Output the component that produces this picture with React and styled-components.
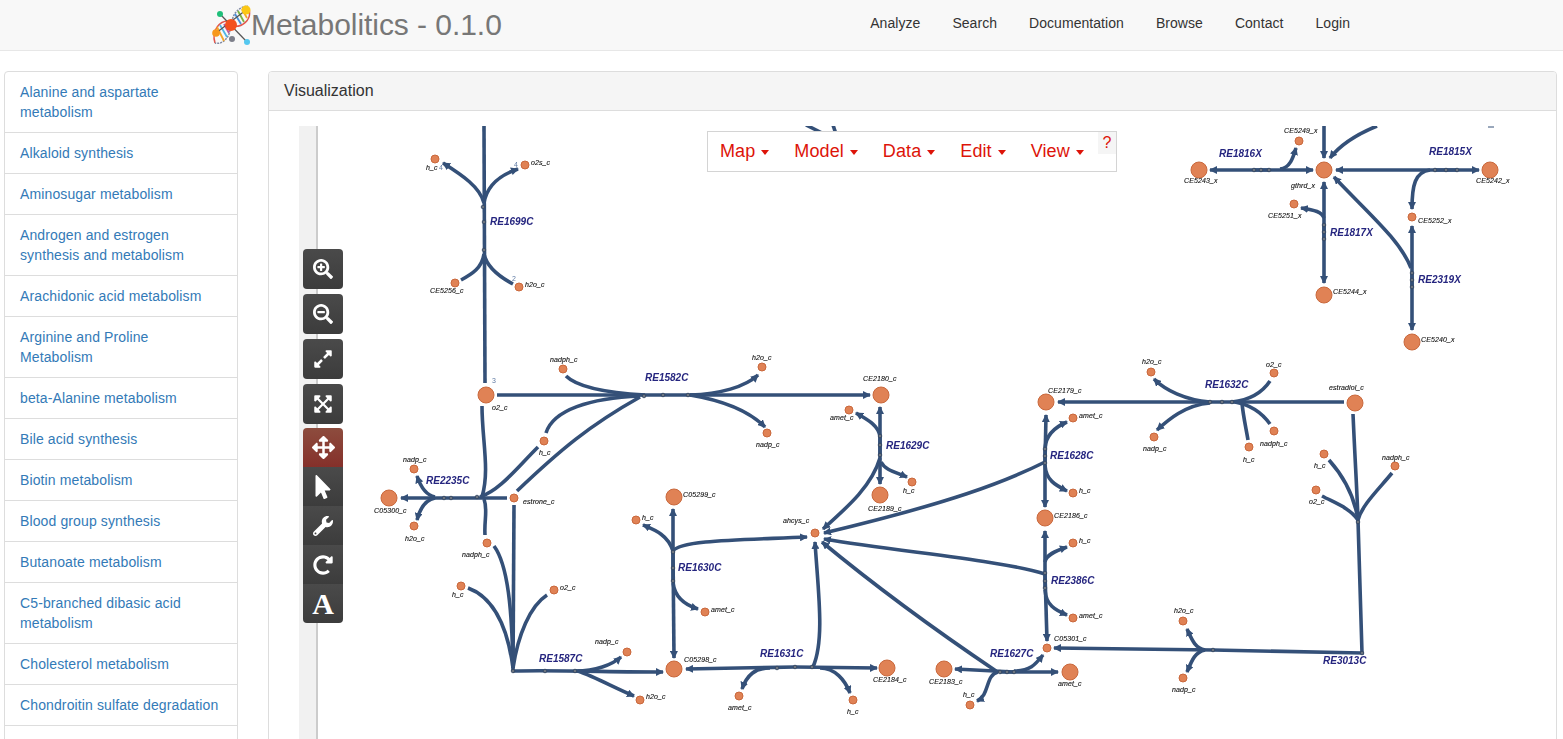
import styled, { createGlobalStyle } from 'styled-components'
import {
  FaSearchPlus,
  FaSearchMinus,
  FaExpandAlt,
  FaExpandArrowsAlt,
  FaArrowsAlt,
  FaMousePointer,
  FaWrench,
  FaRedoAlt,
} from 'react-icons/fa'

const GlobalStyle = createGlobalStyle`
  html, body {
    margin: 0;
    height: 739px;
    overflow: hidden;
    background: #fff;
    font-family: 'Liberation Sans', Arial, sans-serif;
    font-size: 14px;
    color: #333;
  }
  * { box-sizing: border-box; }
`

const Navbar = styled.header`
  height: 51px;
  background: #f8f8f8;
  border-bottom: 1px solid #e7e7e7;
  display: flex;
  align-items: center;
  padding: 0 213px 0 211px;
`

const Brand = styled.a`
  display: flex;
  align-items: center;
  font-size: 30px;
  letter-spacing: -0.05px;
  color: #777;
  text-decoration: none;
`

const Nav = styled.nav`
  margin-left: auto;
  margin-bottom: 4px;
  display: flex;
  gap: 32px;
`

const NavLink = styled.a`
  color: #333;
  font-size: 14px;
  line-height: 20px;
  letter-spacing: 0.05px;
  text-decoration: none;
`

const Layout = styled.div`
  display: flex;
  align-items: flex-start;
  gap: 30px;
  padding: 20px 6px 0 4px;
`

const Sidebar = styled.ul`
  width: 234px;
  flex: none;
  list-style: none;
  margin: 0;
  padding: 0;
`

const SidebarItem = styled.li`
  min-height: 42px;
  padding: 10px 15px;
  margin-bottom: -1px;
  line-height: 20px;
  letter-spacing: 0.12px;
  background: #fff;
  border: 1px solid #ddd;
  color: #337ab7;
  &:first-child {
    border-radius: 4px 4px 0 0;
  }
`

const Panel = styled.section`
  flex: 1;
  min-width: 0;
  border: 1px solid #ddd;
  border-radius: 4px;
  background: #fff;
`

const PanelHeading = styled.div`
  height: 39px;
  padding: 0 15px;
  line-height: 37px;
  font-size: 16px;
  background: #f5f5f5;
  border-bottom: 1px solid #ddd;
  border-radius: 3px 3px 0 0;
`

const PanelBody = styled.div`
  padding: 15px 30px;
`

const Canvas = styled.div`
  position: relative;
  height: 640px;
  overflow: hidden;
  background: #fff;
`

const MapSvg = styled.svg`
  display: block;
  width: 1227px;
  height: 640px;
`

const Strip = styled.rect`
  fill: #f1f1f1;
`

const StripLine = styled.rect`
  fill: #ccc;
`

const Edge = styled.path`
  fill: none;
  stroke: #345078;
  stroke-width: ${(p) => p.$w || 3.6}px;
`

const Midpoint = styled.circle`
  fill: #6b7480;
  stroke: #2f4260;
  stroke-width: 0.8px;
`

const Metabolite = styled.circle`
  fill: #e08255;
  stroke: #c9683c;
  stroke-width: 1px;
`

const TextLayer = styled.g`
  filter: blur(0.25px);
`

const NodeLabel = styled.text`
  font-family: 'Liberation Sans', Arial, sans-serif;
  font-style: italic;
  font-size: 7px;
  letter-spacing: 0.1px;
  fill: #111;
  stroke: #111;
  stroke-width: 0.12px;
`

const StoichLabel = styled.text`
  font-family: 'Liberation Sans', Arial, sans-serif;
  font-size: 7px;
  fill: #5f7aa3;
`

const ReactionLabel = styled.text`
  font-family: 'Liberation Sans', Arial, sans-serif;
  font-style: italic;
  font-weight: bold;
  font-size: 10px;
  fill: #25257f;
`

const MapMenu = styled.div`
  position: absolute;
  left: 408px;
  top: 5px;
  width: 410px;
  height: 41px;
  background: #fff;
  border: 1px solid #d4d4d4;
  display: flex;
  align-items: center;
  padding: 0 0 1px 12px;
  gap: 25px;
`

const MenuItem = styled.span`
  display: flex;
  align-items: center;
  gap: 6px;
  font-size: 18px;
  letter-spacing: 0.1px;
  color: #dd1409;
`

const Caret = styled.i`
  width: 0;
  height: 0;
  border-top: 5px solid #dd1409;
  border-left: 4.5px solid transparent;
  border-right: 4.5px solid transparent;
  margin-top: 3px;
`

const HelpButton = styled.span`
  position: absolute;
  top: 0;
  right: 0;
  width: 18px;
  height: 22px;
  background: #f5f5f5;
  color: #dd1409;
  font-size: 16px;
  line-height: 22px;
  text-align: center;
`

const Toolbar = styled.div`
  position: absolute;
  left: 4px;
  top: 123px;
  width: 40px;
  display: flex;
  flex-direction: column;
  gap: 5px;
`

const ToolGroup = styled.div`
  display: flex;
  flex-direction: column;
  margin-top: -1px;
  border-radius: 4px;
  overflow: hidden;
`

const ToolButton = styled.button`
  width: 40px;
  height: ${(p) => (p.$joined ? 39 : 40)}px;
  padding: 0;
  border: 0;
  border-radius: ${(p) => (p.$joined ? 0 : 4)}px;
  display: flex;
  align-items: center;
  justify-content: center;
  color: #fff;
  font-family: 'Liberation Serif', serif;
  font-weight: bold;
  font-size: 30px;
  background: ${(p) =>
    p.$active
      ? 'linear-gradient(#8d4c3e, #85302a)'
      : 'linear-gradient(#4a4a4a, #3c3c3c)'};
`

const links = ['Analyze', 'Search', 'Documentation', 'Browse', 'Contact', 'Login']

const pathways = [
  'Alanine and aspartate metabolism',
  'Alkaloid synthesis',
  'Aminosugar metabolism',
  'Androgen and estrogen synthesis and metabolism',
  'Arachidonic acid metabolism',
  'Arginine and Proline Metabolism',
  'beta-Alanine metabolism',
  'Bile acid synthesis',
  'Biotin metabolism',
  'Blood group synthesis',
  'Butanoate metabolism',
  'C5-branched dibasic acid metabolism',
  'Cholesterol metabolism',
  'Chondroitin sulfate degradation',
  '',
]

const menus = ['Map', 'Model', 'Data', 'Edit', 'View']

// all map coordinates are page pixels, the svg viewBox starts at the canvas corner
const plainEdges = [
  'M484 126 L485 383',
  'M484 254 C487 268 500 277 513 284',
  'M484 254 C482 268 472 274 461 280',
  'M566 376 C578 388 610 393 645 395',
  'M546 433 C553 410 590 398 640 396',
  'M517 491 C560 450 590 425 640 397',
  'M482 406 C482 440 490 470 482 497',
  'M538 447 C515 470 500 490 480 497',
  'M485 535 C484 520 488 510 484 499',
  'M514 505 L513 671',
  'M494 546 C508 565 512 610 513 668',
  'M468 588 C495 598 508 630 513 668',
  'M547 595 C530 606 518 635 513 668',
  'M1270 381 C1262 393 1250 400 1232 402',
  'M1248 440 C1246 428 1243 415 1242 403',
  'M1270 424 C1262 413 1252 405 1235 402',
  'M1353 414 C1355 460 1357 490 1358 520',
  'M1329 460 C1345 478 1355 500 1358 520',
  'M1322 496 C1335 503 1350 508 1358 520',
  'M1392 473 C1378 490 1362 505 1358 520',
  'M1358 520 L1362 653 L1213 650',
  'M806 125 L824 134',
  'M833 125 L836 134',
]

const arrowEdges = [
  'M484 203 C480 187 462 175 443 163',
  'M484 203 C487 185 500 175 518 169',
  'M497 395 L870 395',
  'M690 395 C720 394 745 387 758 375',
  'M690 395 C720 400 748 410 765 427',
  'M507 498 L401 498',
  'M435 497 C425 495 420 485 417 476',
  'M435 498 C425 500 420 508 417 520',
  'M513 671 C560 670 610 672 663 672',
  'M576 671 C595 671 612 665 621 657',
  'M578 671 C595 677 615 688 634 696',
  'M673 581 L673 509',
  'M673 552 L674 658',
  'M673 551 C668 535 655 530 643 525',
  'M673 551 C680 540 740 540 807 537',
  'M673 583 C675 598 685 605 698 609',
  'M795 667 L686 669',
  'M795 667 L877 668',
  'M813 667 C825 640 818 590 815 542',
  'M770 668 C755 668 747 675 742 689',
  'M820 668 C835 668 845 680 850 693',
  'M1045 462 C1005 482 950 503 824 533',
  'M1045 574 C1000 560 900 552 824 539',
  'M996 671 C950 640 880 590 822 542',
  'M880 458 C872 485 850 505 823 529',
  'M880 455 L880 407',
  'M880 436 L880 484',
  'M880 436 C878 425 868 420 856 413',
  'M881 462 C885 470 895 472 907 477',
  'M1344 402 L1058 402',
  'M1210 402 C1185 400 1165 390 1154 379',
  'M1210 403 C1185 405 1168 420 1157 430',
  'M1045 463 L1046 415',
  'M1045 449 L1045 507',
  'M1045 448 C1046 435 1055 427 1067 422',
  'M1045 465 C1046 480 1055 485 1067 491',
  'M1045 588 L1045 531',
  'M1045 562 C1046 555 1055 551 1067 547',
  'M1045 573 L1047 641',
  'M1045 590 C1046 605 1055 610 1067 615',
  'M1014 672 L955 669',
  'M1000 672 L1058 672',
  'M1014 671 C1030 671 1035 665 1043 655',
  'M998 672 C985 675 990 695 977 701',
  'M1213 650 L1054 648',
  'M1205 650 C1195 648 1192 640 1187 629',
  'M1205 650 C1195 652 1192 660 1187 672',
  'M1324 126 L1324 158',
  'M1377 126 C1355 135 1340 145 1330 158',
  'M1269 170 L1210 170',
  'M1254 170 L1313 170',
  'M1280 169 C1290 168 1293 158 1296 148',
  'M1457 170 L1336 170',
  'M1435 170 L1479 170',
  'M1430 170 C1415 172 1412 185 1412 209',
  'M1324 239 L1324 182',
  'M1324 225 L1324 283',
  'M1324 218 C1322 212 1315 210 1301 208',
  'M1412 287 L1412 226',
  'M1412 273 L1412 330',
  'M1411 268 C1400 240 1370 215 1334 177',
]

const midpoints = [
  [483, 207], [484, 222], [484, 250],
  [644, 396], [663, 395], [688, 395],
  [444, 498], [451, 498], [477, 497],
  [513, 671], [545, 671], [575, 671],
  [673, 552], [673, 568], [673, 581],
  [777, 668], [795, 667], [812, 667],
  [880, 436], [880, 445], [880, 455],
  [1210, 402], [1222, 402], [1232, 402],
  [1358, 522], [1362, 653], [1213, 650],
  [1045, 449], [1045, 456], [1045, 463],
  [1045, 573], [1045, 581], [1045, 588],
  [1000, 672], [1007, 672], [1014, 672],
  [1254, 170], [1261, 170], [1269, 170],
  [1435, 170], [1446, 170], [1457, 170],
  [1324, 225], [1324, 232], [1324, 239],
  [1412, 273], [1412, 280], [1412, 287],
]

// x, y, radius, label, label x, label baseline
const metabolites = [
  [435, 159, 4, 'h_c', 426, 170],
  [525, 165, 4, 'o2s_c', 531, 165],
  [455, 283, 4, 'CE5256_c', 430, 293],
  [519, 287, 4, 'h2o_c', 525, 287],
  [486, 395, 8, 'o2_c', 492, 410],
  [563, 369, 4, 'nadph_c', 550, 362],
  [544, 441, 4, 'h_c', 539, 455],
  [514, 498, 4, 'estrone_c', 523, 504],
  [762, 367, 4, 'h2o_c', 752, 360],
  [767, 433, 4, 'nadp_c', 756, 447],
  [881, 395, 8, 'CE2180_c', 863, 381],
  [849, 410, 4, 'amet_c', 830, 420],
  [880, 495, 8, 'CE2189_c', 868, 511],
  [912, 482, 4, 'h_c', 903, 493],
  [389, 498, 8, 'C05300_c', 374, 513],
  [414, 469, 4, 'nadp_c', 403, 462],
  [414, 526, 4, 'h2o_c', 405, 541],
  [487, 543, 4, 'nadph_c', 462, 557],
  [461, 586, 4, 'h_c', 452, 597],
  [554, 590, 4, 'o2_c', 560, 590],
  [627, 652, 4, 'nadp_c', 595, 644],
  [640, 700, 4, 'h2o_c', 646, 699],
  [674, 669, 8, 'C05298_c', 684, 662],
  [674, 497, 8, 'C05299_c', 683, 497],
  [636, 520, 4, 'h_c', 642, 520],
  [705, 612, 4, 'amet_c', 711, 612],
  [815, 533, 4, 'ahcys_c', 783, 523],
  [887, 668, 8, 'CE2184_c', 873, 682],
  [739, 696, 4, 'amet_c', 728, 710],
  [853, 700, 4, 'h_c', 847, 714],
  [1046, 402, 8, 'CE2179_c', 1048, 393],
  [1355, 403, 8, 'estradiol_c', 1329, 390],
  [1151, 372, 4, 'h2o_c', 1142, 364],
  [1274, 373, 4, 'o2_c', 1266, 367],
  [1154, 437, 4, 'nadp_c', 1143, 451],
  [1249, 447, 4, 'h_c', 1243, 462],
  [1274, 431, 4, 'nadph_c', 1260, 446],
  [1324, 454, 4, 'h_c', 1314, 468],
  [1316, 490, 4, 'o2_c', 1309, 504],
  [1395, 466, 4, 'nadph_c', 1382, 460],
  [1073, 418, 4, 'amet_c', 1079, 418],
  [1073, 493, 4, 'h_c', 1079, 493],
  [1045, 518, 8, 'CE2186_c', 1054, 518],
  [1073, 543, 4, 'h_c', 1079, 543],
  [1073, 618, 4, 'amet_c', 1079, 618],
  [1047, 648, 4, 'C05301_c', 1054, 641],
  [944, 669, 8, 'CE2183_c', 929, 684],
  [1070, 672, 8, 'amet_c', 1058, 686],
  [970, 705, 4, 'h_c', 963, 697],
  [1183, 621, 4, 'h2o_c', 1174, 613],
  [1183, 678, 4, 'nadp_c', 1172, 692],
  [1324, 170, 8, 'gthrd_x', 1291, 188],
  [1199, 170, 8, 'CE5243_x', 1184, 183],
  [1299, 141, 4, 'CE5249_x', 1284, 133],
  [1490, 170, 8, 'CE5242_x', 1476, 183],
  [1412, 217, 4, 'CE5252_x', 1418, 223],
  [1324, 295, 8, 'CE5244_x', 1333, 294],
  [1294, 204, 4, 'CE5251_x', 1268, 218],
  [1412, 342, 8, 'CE5240_x', 1421, 342],
]

const reactions = [
  ['RE1699C', 490, 225],
  ['RE1582C', 645, 381],
  ['RE2235C', 426, 484],
  ['RE1587C', 539, 662],
  ['RE1630C', 678, 571],
  ['RE1631C', 760, 657],
  ['RE1629C', 886, 449],
  ['RE1632C', 1205, 388],
  ['RE1628C', 1050, 459],
  ['RE2386C', 1051, 584],
  ['RE1627C', 990, 657],
  ['RE3013C', 1323, 664],
  ['RE1816X', 1219, 157],
  ['RE1815X', 1429, 155],
  ['RE1817X', 1330, 236],
  ['RE2319X', 1418, 283],
]

const stoichiometry = [
  ['4', 439, 170],
  ['4', 514, 167],
  ['2', 512, 281],
  ['3', 492, 383],
]

const Logo = () => (
  <svg width="40" height="42" viewBox="211 4 40 42" style={{ flex: 'none' }}>
    <g fill="none" strokeWidth="1.5">
      <path d="M232 22 C233 12 240 7 248 6" stroke="#7f89a3" strokeDasharray="2 1" />
      <path d="M232 26 C242 28 252 20 249 9" stroke="#e2574c" />
      <path d="M228 21 C220 21 211 30 215 43" stroke="#e2574c" />
      <path d="M230 30 C229 38 222 45 215 43" stroke="#7f89a3" strokeDasharray="2 1" />
      <path d="M235 14 L241 24" stroke="#4a90d9" strokeWidth="1.8" />
      <path d="M238 11 L244 22" stroke="#7cb342" strokeWidth="1.8" />
      <path d="M242 9 L247 18" stroke="#f4a62a" strokeWidth="1.8" />
      <path d="M217 27 L224 41" stroke="#f4a62a" strokeWidth="1.8" />
      <path d="M220 25 L227 37" stroke="#4fb6e6" strokeWidth="1.8" />
      <path d="M224 24 L229 33" stroke="#c2569b" strokeWidth="1.8" />
      <path d="M220 14 L247 42" stroke="#555" strokeWidth="1.2" />
      <path d="M246 10 L216 33" stroke="#555" strokeWidth="1.2" />
    </g>
    <circle cx="220" cy="14" r="3" fill="#1fbf7a" />
    <circle cx="246" cy="10" r="4.5" fill="#fbc715" />
    <circle cx="216" cy="33" r="3.8" fill="#f7981d" />
    <circle cx="232" cy="39" r="3" fill="#7d7f8a" />
    <circle cx="247" cy="42" r="3" fill="#55c8f0" />
    <circle cx="231" cy="25" r="6" fill="#f4511e" />
  </svg>
)

const App = () => (
  <>
    <GlobalStyle />
    <Navbar>
      <Brand>
        <Logo />
        Metabolitics - 0.1.0
      </Brand>
      <Nav>
        {links.map((link) => (
          <NavLink key={link}>{link}</NavLink>
        ))}
      </Nav>
    </Navbar>
    <Layout>
      <Sidebar>
        {pathways.map((name) => (
          <SidebarItem key={name}>{name}</SidebarItem>
        ))}
      </Sidebar>
      <Panel>
        <PanelHeading>Visualization</PanelHeading>
        <PanelBody>
          <Canvas>
            <MapSvg viewBox="299 126 1227 640">
              <defs>
                <marker
                  id="arrow"
                  viewBox="0 0 8 8"
                  refX="7"
                  refY="4"
                  markerWidth="8"
                  markerHeight="8"
                  markerUnits="userSpaceOnUse"
                  orient="auto"
                >
                  <path d="M0 0 L8 4 L0 8 Z" fill="#345078" />
                </marker>
              </defs>
              <Strip x="299" y="126" width="18" height="640" />
              <StripLine x="316" y="126" width="2" height="640" />
              {plainEdges.map((d) => (
                <Edge key={d} d={d} />
              ))}
              {arrowEdges.map((d) => (
                <Edge key={d} d={d} markerEnd="url(#arrow)" />
              ))}
              <Edge d="M1488 127 L1494 127" $w={1} />
              {midpoints.map(([x, y]) => (
                <Midpoint key={`${x}-${y}`} cx={x} cy={y} r="1.8" />
              ))}
              {metabolites.map(([x, y, r]) => (
                <Metabolite key={`${x}-${y}`} cx={x} cy={y} r={r} />
              ))}
              <TextLayer>
                {metabolites.map(([x, y, , label, lx, ly]) => (
                  <NodeLabel key={`${x}-${y}`} x={lx} y={ly}>{label}</NodeLabel>
                ))}
                {stoichiometry.map(([n, x, y]) => (
                  <StoichLabel key={`${x}-${y}`} x={x} y={y}>{n}</StoichLabel>
                ))}
                {reactions.map(([name, x, y]) => (
                  <ReactionLabel key={name} x={x} y={y}>{name}</ReactionLabel>
                ))}
              </TextLayer>
            </MapSvg>
            <MapMenu>
              {menus.map((menu) => (
                <MenuItem key={menu}>
                  {menu}
                  <Caret />
                </MenuItem>
              ))}
              <HelpButton>?</HelpButton>
            </MapMenu>
            <Toolbar>
              <ToolButton><FaSearchPlus size={20} /></ToolButton>
              <ToolButton><FaSearchMinus size={20} /></ToolButton>
              <ToolButton><FaExpandAlt size={20} /></ToolButton>
              <ToolButton><FaExpandArrowsAlt size={20} /></ToolButton>
              <ToolGroup>
                <ToolButton $joined $active><FaArrowsAlt size={23} /></ToolButton>
                <ToolButton $joined><FaMousePointer size={24} /></ToolButton>
                <ToolButton $joined><FaWrench size={20} /></ToolButton>
                <ToolButton $joined><FaRedoAlt size={20} /></ToolButton>
                <ToolButton $joined>A</ToolButton>
              </ToolGroup>
            </Toolbar>
          </Canvas>
        </PanelBody>
      </Panel>
    </Layout>
  </>
)

export default App
